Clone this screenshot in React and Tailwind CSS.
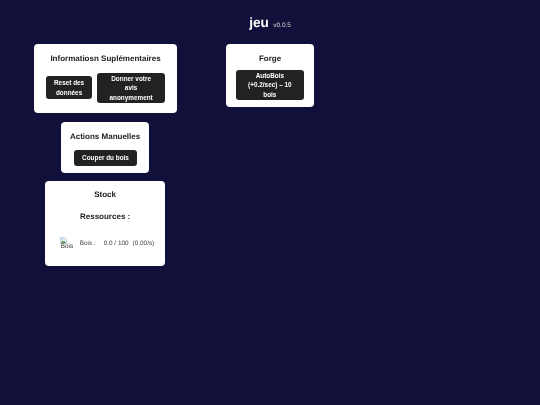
function Btn({ className = "", children }) {
  return (
    <button className={"bg-[#222222] text-white font-bold text-[6.4px] leading-[9.6px] rounded-[3px] text-center will-change-transform " + className}>
      {children}
    </button>
  );
}

function BrokenImage() {
  return (
    <div className="w-[15px] h-[14px] overflow-hidden relative shrink-0">
      <svg width="7" height="7" viewBox="0 0 16 16" className="absolute left-0 top-0">
        <path d="M1 1h10l4 4v10H1z" fill="#e8eef8" stroke="#9aa3b0" strokeWidth="1" />
        <path d="M2 14l4-6 3 3 2-2 3 5z" fill="#4f9a45" />
        <circle cx="5" cy="5" r="1.6" fill="#8fb8ea" />
      </svg>
      <span className="absolute left-[1px] top-[6px] text-[6.4px] leading-[8px] text-[#333333]">Bois</span>
    </div>
  );
}

export default function App() {
  return (
    <div className="min-h-screen bg-[#10103a] font-['Liberation_Sans',Arial,sans-serif] text-[#222222] [text-rendering:geometricPrecision]">
      <div className="flex justify-center items-baseline pt-[14px] h-[43.7px] gap-[4.5px] text-white will-change-transform">
        <h1 className="text-[13.6px] font-bold leading-[18px]">jeu</h1>
        <span className="text-[6.4px] text-[#dddddd]">v0.0.5</span>
      </div>
      <div className="flex items-start">
        <div className="w-[210.5px] flex flex-col items-center gap-[8.6px]">
          <section className="w-[143px] h-[69.4px] bg-white rounded-[4px] flex flex-col items-center will-change-transform">
            <h2 className="text-[8px] font-bold leading-[11px] mt-[9px]">Informatiosn Suplémentaires</h2>
            <div className="flex items-center gap-[4px] mt-[8.6px]">
              <Btn className="w-[46.2px] h-[23px]">Reset des<br />données</Btn>
              <Btn className="w-[68.2px] h-[30.2px]">Donner votre<br />avis<br />anonymement</Btn>
            </div>
          </section>
          <section className="w-[88.2px] h-[50.6px] bg-white rounded-[4px] flex flex-col items-center will-change-transform">
            <h2 className="text-[8px] font-bold leading-[11px] mt-[9px]">Actions Manuelles</h2>
            <Btn className="w-[63px] h-[16px] mt-[8.3px]">Couper du bois</Btn>
          </section>
          <section className="w-[120.2px] h-[85.2px] bg-white rounded-[4px] flex flex-col items-center will-change-transform">
            <h2 className="text-[8px] font-bold leading-[11px] mt-[8px]">Stock</h2>
            <h3 className="text-[8px] font-bold leading-[11px] mt-[11px]">Ressources :</h3>
            <div className="flex items-center self-start ml-[14.7px] mt-[14.5px] text-[6.4px] leading-[9px] text-[#444444]">
              <BrokenImage />
              <span className="ml-[5px] w-[24px]">Bois :</span>
              <span>0.0 / 100</span>
              <span className="ml-[4px]">(0.00/s)</span>
            </div>
          </section>
        </div>
        <section className="ml-[15.5px] w-[88px] h-[63.4px] bg-white rounded-[4px] flex flex-col items-center will-change-transform">
          <h2 className="text-[8px] font-bold leading-[11px] mt-[9px]">Forge</h2>
          <Btn className="w-[67.7px] h-[30px] mt-[5.8px]">AutoBois<br />(+0.2/sec) – 10<br />bois</Btn>
        </section>
      </div>
    </div>
  );
}
